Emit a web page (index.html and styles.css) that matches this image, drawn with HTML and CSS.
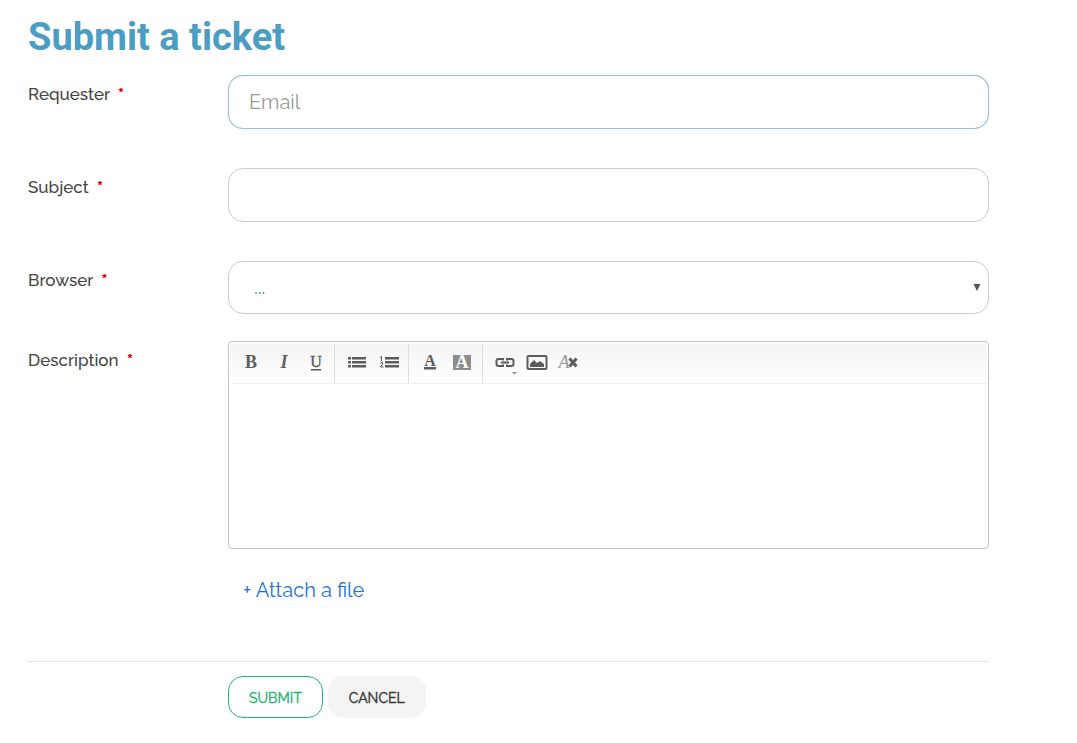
FILE: index.html
```
<!DOCTYPE html>
<html lang="en">
<head>
    <meta charset="UTF-8">
    <meta name="viewport" content="width=device-width, initial-scale=1.0">
    <title>Submit a ticket</title>
    <link rel="stylesheet" href="styles.css">
</head>
<body>
    <main class="ticket-page">
        <h1>Submit a ticket</h1>
        <form class="ticket-form">
            <div class="form-row">
                <label for="requester">Requester <span class="required">*</span></label>
                <input type="email" id="requester" class="field field-active" name="requester" placeholder="Email" required>
            </div>
            <div class="form-row">
                <label for="subject">Subject <span class="required">*</span></label>
                <input type="text" id="subject" class="field" name="subject" required>
            </div>
            <div class="form-row form-row-select">
                <label for="browser">Browser <span class="required">*</span></label>
                <div class="select-box">
                    <select id="browser" class="field" name="browser" required>
                        <option value="">...</option>
                        <option>Chrome</option>
                        <option>Firefox</option>
                        <option>Safari</option>
                    </select>
                    <svg class="select-arrow" viewBox="0 0 8 8" aria-hidden="true"><path d="M0.500 0h7L4 7z"/></svg>
                </div>
            </div>
            <div class="form-row">
                <label for="description">Description <span class="required">*</span></label>
                <div class="editor">
                    <div class="toolbar">
                        <div class="tool-group">
                            <button type="button" class="tool" aria-label="Bold">
                                <svg viewBox="0 0 32 38"><text x="16" y="24" class="glyph">B</text></svg>
                            </button>
                            <button type="button" class="tool" aria-label="Italic">
                                <svg viewBox="0 0 32 38"><text x="17" y="24" class="glyph glyph-italic">I</text></svg>
                            </button>
                            <button type="button" class="tool" aria-label="Underline">
                                <svg viewBox="0 0 32 38"><text x="17" y="23" class="glyph glyph-thin">U</text><path d="M12 25h10v1.500H12z"/></svg>
                            </button>
                        </div>
                        <div class="tool-group">
                            <button type="button" class="tool" aria-label="Bulleted list">
                                <svg viewBox="0 0 32 38"><path d="M7 13h3v2.500H7zM11 13h14v2.500H11zM7 17h3v2.500H7zM11 17h14v2.500H11zM7 21h3v2.500H7zM11 21h14v2.500H11z"/></svg>
                            </button>
                            <button type="button" class="tool" aria-label="Numbered list">
                                <svg viewBox="0 0 32 38"><path d="M12 13h14v2.500H12zM12 17h14v2.500H12zM12 21h14v2.500H12z"/><path d="M7 13.500l1.500-1v4.500M7 19.500l1-1h1.500v1.500L7.500 23h3" class="line-thin"/></svg>
                            </button>
                        </div>
                        <div class="tool-group">
                            <button type="button" class="tool" aria-label="Text color">
                                <svg viewBox="0 0 32 38"><text x="15" y="22" class="glyph glyph-small">A</text><path d="M9 23h12v2.500H9z"/></svg>
                            </button>
                            <button type="button" class="tool" aria-label="Background color">
                                <svg viewBox="0 0 32 38"><path d="M6 11h18v15H6z" class="light-fill"/><text x="15" y="24" class="glyph glyph-white">A</text></svg>
                            </button>
                        </div>
                        <div class="tool-group">
                            <button type="button" class="tool" aria-label="Link">
                                <svg viewBox="0 0 32 38"><path d="M14 16.500v-1.500h-4.500a2 2 0 0 0-2 2v3a2 2 0 0 0 2 2H14V20.500M18 16.500v-1.500h4.500a2 2 0 0 1 2 2v3a2 2 0 0 1-2 2H18V20.500M12 18.500h8" class="line"/><path d="M23 28h5l-2.500 2.500z" class="light-fill"/></svg>
                            </button>
                            <button type="button" class="tool" aria-label="Image">
                                <svg viewBox="0 0 32 38"><rect x="6.500" y="12" width="19" height="13" rx="1" class="line"/><path d="M9 23v-3l4-4 3 3 3-2 4 3v3z"/></svg>
                            </button>
                            <button type="button" class="tool" aria-label="Remove formatting">
                                <svg viewBox="0 0 32 38"><text x="11" y="24" class="glyph glyph-clear">A</text><path d="M16.500 14.500l7 8M23.500 14.500l-7 8" class="line-cross"/></svg>
                            </button>
                        </div>
                    </div>
                    <textarea id="description" name="description"></textarea>
                </div>
            </div>
            <a href="#" class="attach-link"><span class="attach-plus">+</span> Attach a file</a>
            <div class="form-actions">
                <button type="submit" class="btn btn-submit">SUBMIT</button>
                <button type="button" class="btn btn-cancel">CANCEL</button>
            </div>
        </form>
    </main>
</body>
</html>
```

FILE: styles.css
```
* {
    box-sizing: border-box;
}
body {
    margin: 0;
    background: #fff;
    color: #444;
    font-family: Raleway, Lato, sans-serif;
}
.ticket-page {
    padding: 14px 88px 24px 28px;
}
h1 {
    margin: 0 0 15px;
    font-family: Roboto, sans-serif;
    font-size: 38px;
    font-weight: 700;
    line-height: 46px;
    color: #4c9dc4;
}
.form-row {
    display: grid;
    grid-template-columns: 200px 1fr;
    margin-bottom: 39px;
}
.form-row-select {
    margin-bottom: 27px;
}
.form-row label {
    padding-top: 8px;
    font-size: 17px;
    font-weight: 500;
    line-height: 22px;
}
.required {
    margin-left: 4px;
    font-weight: 800;
    color: #e00000;
}
.field {
    width: 100%;
    height: 54px;
    padding: 0 20px;
    border: 1px solid #ccc;
    border-radius: 15px;
    background: #fff;
    font-family: inherit;
    font-size: 20px;
    outline: none;
}
.field::placeholder {
    color: #999;
    opacity: 1;
}
.field-active {
    border-color: #97bfe0;
    box-shadow: 0 0 1px #97bfe0;
}
.select-box {
    position: relative;
}
select.field {
    display: block;
    height: 53px;
    padding: 0 25px 2px;
    appearance: none;
    font-size: 20px;
    color: #1a9a78;
}
.select-arrow {
    position: absolute;
    top: 23px;
    right: 8px;
    width: 8px;
    height: 8px;
    fill: #555;
    pointer-events: none;
}
.editor {
    border: 1px solid #c4c4c4;
    border-radius: 4px;
}
.toolbar {
    display: flex;
    margin: 2px 1px 0;
    border-bottom: 1px solid #eee;
    border-radius: 4px 4px 0 0;
    background: linear-gradient(#f4f4f4, #fff);
}
.tool-group {
    display: flex;
    padding: 0 3px 0 6px;
    border-right: 1px solid #ddd;
}
.tool-group:first-child {
    padding-left: 5px;
}
.tool-group:last-child {
    border-right: none;
}
.tool {
    width: 32px;
    height: 39px;
    padding: 0 0 2px;
    border: none;
    background: none;
    cursor: pointer;
}
.tool svg {
    display: block;
    width: 32px;
    height: 38px;
    fill: #5c5c5c;
}
.tool .glyph {
    font-family: "Liberation Serif", serif;
    font-size: 18px;
    font-weight: 700;
    text-anchor: middle;
}
.tool .glyph-italic {
    font-style: italic;
}
.tool .glyph-thin {
    font-size: 16px;
    font-weight: 400;
    stroke: #5c5c5c;
    stroke-width: 0.4px;
}
.tool .glyph-small {
    font-size: 16px;
}
.tool .glyph-white {
    fill: #fff;
}
.tool .glyph-clear {
    font-style: italic;
    font-weight: 400;
    fill: #999;
}
.tool .light-fill {
    fill: #8c8c8c;
}
.tool .line,
.tool .line-thin,
.tool .line-cross {
    fill: none;
    stroke: #5c5c5c;
    stroke-width: 2px;
}
.tool .line-thin {
    stroke-width: 1px;
}
.tool .line-cross {
    stroke-width: 3px;
}
.editor textarea {
    display: block;
    width: 100%;
    height: 164px;
    padding: 12px;
    border: none;
    background: transparent;
    font-family: inherit;
    font-size: 16px;
    outline: none;
    resize: none;
}
.attach-link {
    display: block;
    width: fit-content;
    margin: -12px 0 57px 215px;
    font-size: 20px;
    line-height: 28px;
    color: #1a6fe0;
    text-decoration: none;
}
.form-actions {
    display: flex;
    gap: 5px;
    padding: 14px 0 0 200px;
    border-top: 1px solid #e4e4e4;
}
.btn {
    height: 42px;
    padding: 2px 20px 0;
    border: 1px solid transparent;
    border-radius: 15px;
    font-family: inherit;
    font-size: 14px;
    -webkit-text-stroke: 0.4px;
    cursor: pointer;
}
.btn-submit {
    border-color: #27b373;
    background: #fff;
    color: #27b373;
}
.btn-cancel {
    background: #f4f4f4;
    color: #333;
}
```
